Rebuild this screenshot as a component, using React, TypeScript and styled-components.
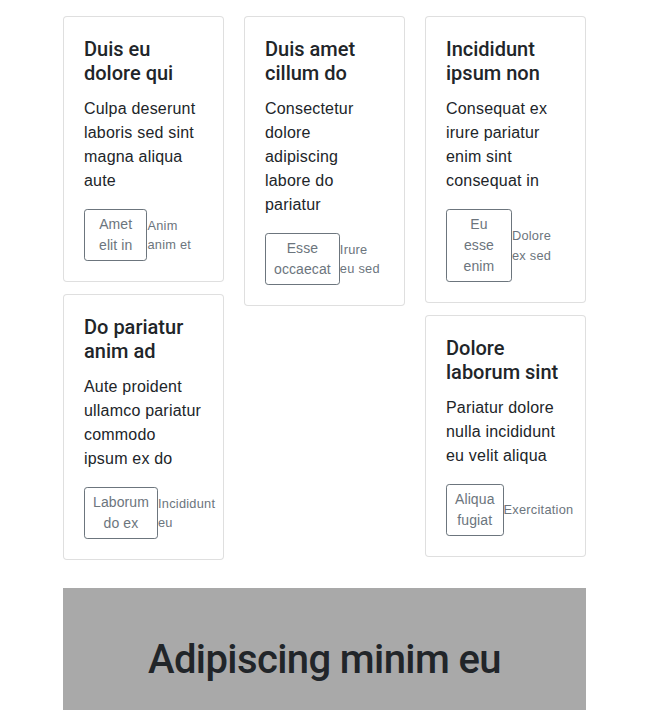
import React from "react";
import styled, { createGlobalStyle } from "styled-components";

const GlobalStyle = createGlobalStyle`
  body {
    margin: 0;
    font-family: "Liberation Sans", Arial, sans-serif;
    font-size: 16px;
    line-height: 1.5;
    color: #212529;
    background: #fff;
  }
  * {
    box-sizing: border-box;
  }
`;

const Page = styled.div`
  width: 523px;
  margin: 0 auto;
  padding-top: 16px;
`;

const Columns = styled.div`
  display: grid;
  grid-template-columns: repeat(3, 161px);
  column-gap: 20px;
  align-items: start;
`;

const Column = styled.div`
  display: flex;
  flex-direction: column;
  gap: 12px;
`;

const Card = styled.div`
  border: 1px solid rgba(0, 0, 0, 0.125);
  border-radius: 4px;
  background: #fff;
`;

const CardBody = styled.div`
  padding: 20px;
`;

const CardTitle = styled.h5`
  margin: 0 0 12px;
  font-family: Roboto, "Liberation Sans", Arial, sans-serif;
  font-size: 20px;
  font-weight: 500;
  line-height: 1.2;
`;

const CardText = styled.p`
  margin: 0 0 16px;
  letter-spacing: 0.2px;
`;

const Actions = styled.div`
  display: flex;
  align-items: center;
`;

const OutlineButton = styled.button`
  flex-shrink: 1.25;
  font-family: inherit;
  font-size: 14px;
  line-height: 1.5;
  letter-spacing: 0.1px;
  padding: 4px 8px;
  color: #6c757d;
  background: transparent;
  border: 1px solid #6c757d;
  border-radius: 3.2px;
  text-align: center;
`;

const Muted = styled.small`
  font-size: 12.8px;
  line-height: 1.5;
  letter-spacing: 0.25px;
  color: #6c757d;
`;

const Banner = styled.section`
  margin-top: 28px;
  padding: 48px 0;
  background: #a9a9a9;
  text-align: center;
`;

const BannerTitle = styled.h1`
  margin: 0;
  font-family: Roboto, "Liberation Sans", Arial, sans-serif;
  font-size: 40px;
  font-weight: 500;
  line-height: 1.2;
  letter-spacing: -0.6px;
  color: #212529;
`;

type Item = { title: string; text: string; button: string; note: string };

const columns: Item[][] = [
  [
    {
      title: "Duis eu dolore qui",
      text: "Culpa deserunt laboris sed sint magna aliqua aute",
      button: "Amet elit in",
      note: "Anim anim et",
    },
    {
      title: "Do pariatur anim ad",
      text: "Aute proident ullamco pariatur commodo ipsum ex do",
      button: "Laborum do ex",
      note: "Incididunt eu",
    },
  ],
  [
    {
      title: "Duis amet cillum do",
      text: "Consectetur dolore adipiscing labore do pariatur",
      button: "Esse occaecat",
      note: "Irure eu sed",
    },
  ],
  [
    {
      title: "Incididunt ipsum non",
      text: "Consequat ex irure pariatur enim sint consequat in",
      button: "Eu esse enim",
      note: "Dolore ex sed",
    },
    {
      title: "Dolore laborum sint",
      text: "Pariatur dolore nulla incididunt eu velit aliqua",
      button: "Aliqua fugiat",
      note: "Exercitation",
    },
  ],
];

const InfoCard = ({ item }: { item: Item }) => (
  <Card>
    <CardBody>
      <CardTitle>{item.title}</CardTitle>
      <CardText>{item.text}</CardText>
      <Actions>
        <OutlineButton type="button">{item.button}</OutlineButton>
        <Muted>{item.note}</Muted>
      </Actions>
    </CardBody>
  </Card>
);

export default function App() {
  return (
    <>
      <GlobalStyle />
      <Page>
        <Columns>
          {columns.map((col, i) => (
            <Column key={i}>
              {col.map((item) => (
                <InfoCard key={item.title} item={item} />
              ))}
            </Column>
          ))}
        </Columns>
        <Banner>
          <BannerTitle>Adipiscing minim eu</BannerTitle>
        </Banner>
      </Page>
    </>
  );
}
